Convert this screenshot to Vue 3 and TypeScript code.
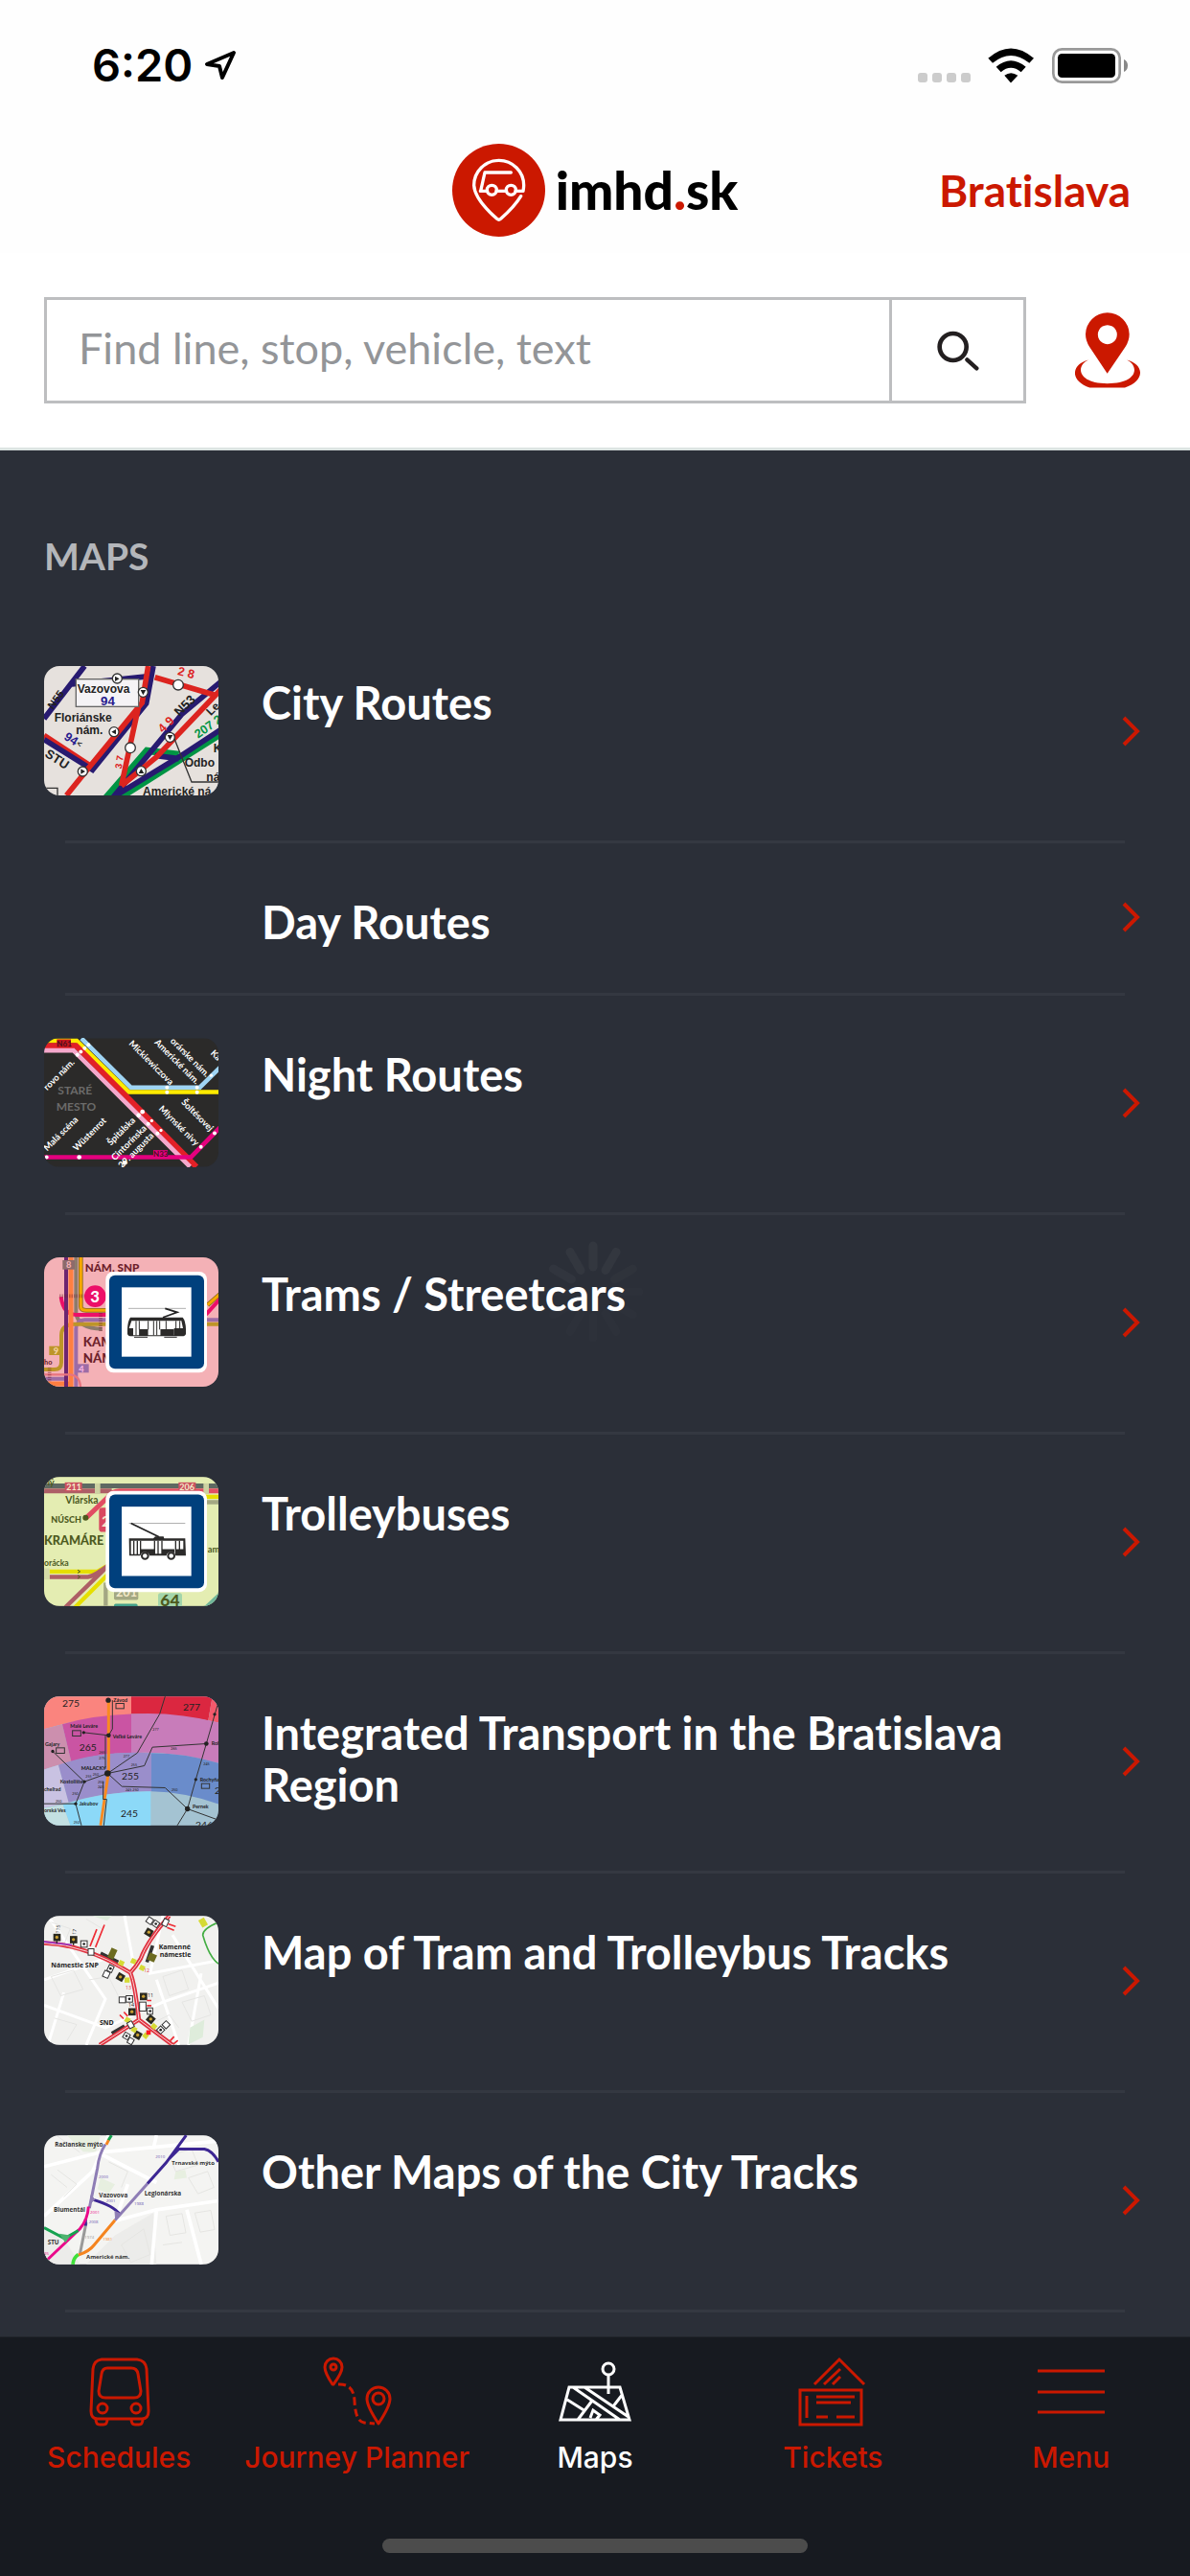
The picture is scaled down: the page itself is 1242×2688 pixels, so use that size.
<script setup lang="ts">
import { ref } from 'vue'

interface MapItem {
  title: string
  thumb: string
}

interface Tab {
  label: string
  icon: string
}

const query = ref('')
const activeTab = ref('Maps')

const maps: MapItem[] = [
  { title: 'City Routes', thumb: 'city' },
  { title: 'Day Routes', thumb: '' },
  { title: 'Night Routes', thumb: 'night' },
  { title: 'Trams / Streetcars', thumb: 'tram' },
  { title: 'Trolleybuses', thumb: 'trolley' },
  { title: 'Integrated Transport in the Bratislava Region', thumb: 'region' },
  { title: 'Map of Tram and Trolleybus Tracks', thumb: 'tracks' },
  { title: 'Other Maps of the City Tracks', thumb: 'other' },
]

const tabs: Tab[] = [
  { label: 'Schedules', icon: 'bus' },
  { label: 'Journey Planner', icon: 'journey' },
  { label: 'Maps', icon: 'map' },
  { label: 'Tickets', icon: 'ticket' },
  { label: 'Menu', icon: 'menu' },
]

const spokes = [0.04, 0.04, 0.02, 0.01, 0.01, 0.01, 0.01, 0.01, 0.01, 0.01, 0.03, 0.04]
</script>

<template>
  <div class="app">
    <div class="status">
      <div class="clock">
        <span>6:20</span>
        <svg class="locating" viewBox="0 0 34 32" aria-hidden="true">
          <path d="M31 3 L3 15 L16 17 L19 29 Z" fill="none" stroke="#000" stroke-width="4" stroke-linejoin="round" />
        </svg>
      </div>
      <div class="indicators">
        <div class="dots"><i v-for="n in 4" :key="n"></i></div>
        <svg class="wifi" viewBox="394 56 144 110" aria-hidden="true">
          <path d="M395 88 Q466 26 538 88 L524 103 Q466 56 409 103Z" />
          <path d="M420 115 Q466 76 513 115 L498 131 Q466 105 435 131Z" />
          <path d="M446 142 Q466 126 488 142 L466 165Z" />
        </svg>
        <svg class="battery" viewBox="594 57 237 111" aria-hidden="true">
          <rect x="598" y="61" width="208" height="103" rx="27" fill="none" stroke="#999" stroke-width="8" />
          <rect x="612" y="75" width="180" height="75" rx="13" />
          <path d="M819 93 Q831 98 831 112 Q831 127 819 132Z" fill="#888" />
        </svg>
      </div>
    </div>

    <header class="header">
      <a class="brand" href="#" aria-label="imhd.sk">
        <svg class="brand-mark" viewBox="93 60 291 291" aria-hidden="true">
          <circle cx="238.500" cy="205.500" r="145.500" fill="#cb1800" />
          <g fill="none" stroke="#fff" stroke-width="10" stroke-linecap="round" stroke-linejoin="round">
            <path d="M181 208 H203 M231 208 H263 M291 208 H315 Q317 198 317 190 A78 78 0 0 0 161 190 Q163 233 233 295 Q239 300 245 295 Q288 257 308 224" />
            <path d="M182 208 L195 150 H277" />
            <circle cx="217" cy="205" r="15" />
            <circle cx="277" cy="205" r="15" />
          </g>
        </svg>
        <span class="brand-name">imhd<b>.</b>sk</span>
      </a>
      <a class="city" href="#">Bratislava</a>
    </header>

    <form class="search" @submit.prevent>
      <div class="field">
        <input v-model="query" type="text" placeholder="Find line, stop, vehicle, text" aria-label="Find line, stop, vehicle, text" />
        <button type="submit" aria-label="Search">
          <svg class="glass" viewBox="236 950 132 126" aria-hidden="true">
            <g fill="none" stroke="#231f20" stroke-linecap="round">
              <circle cx="286" cy="1001" r="42" stroke-width="14" />
              <path d="M330 1041 L360 1068" stroke-width="13" />
            </g>
          </svg>
        </button>
      </div>
      <button class="nearby" type="button" aria-label="Nearby stops">
        <svg viewBox="666 890 204 236" aria-hidden="true">
          <g fill="#cb1800">
            <path fill-rule="evenodd" d="M767 1081 L711 997 Q699 978 699 958 A68 67 0 0 1 836 958 Q836 978 824 997Z M767 929 a30 30 0 1 0 1 0Z" />
            <path d="M708 1038 C652 1053 650 1105 712 1125 H822 C885 1105 885 1053 828 1038 C868 1056 864 1112 767 1112 C672 1112 668 1056 708 1038Z" />
          </g>
        </svg>
      </button>
    </form>

    <main class="content">
      <h1>MAPS</h1>
      <ul>
        <li v-for="item in maps" :key="item.title">
          <a class="row" href="#">
            <span class="thumb">
              <svg v-if="item.thumb === 'city'" viewBox="48 75 546 405" font-family="Liberation Sans, sans-serif" font-weight="700" font-size="36" fill="#222">
                <rect x="48" y="75" width="546" height="405" fill="#e6e1dd" />
                <g fill="none" stroke-width="17">
                  <path d="M48 240 L175 75 M135 132 L385 106" stroke="#271a70" />
                  <path d="M240 490 L370 340 L470 352 M280 490 L600 288" stroke="#009444" stroke-width="22" />
                  <path d="M48 292 L190 385" stroke="#dc241f" />
                  <path d="M48 305 L200 400 L368 192 L390 75 M265 485 L480 225 L600 125 M265 485 L470 360 L600 275 M395 355 L470 365" stroke="#271a70" />
                  <path d="M118 480 L195 385 L355 190 L374 75 M395 110 L580 165 M343 205 L290 450 M290 450 L400 360 L600 150" stroke="#dc241f" />
                </g>
                <path d="M455 300 L510 438 H600 M48 457 H90 V480" fill="none" stroke="#333" stroke-width="4" />
                <rect x="148" y="116" width="196" height="86" fill="#f5f3f6" stroke="#666" stroke-width="4" />
                <g fill="#fff" stroke="#333" stroke-width="4">
                  <circle cx="468" cy="134" r="16" /><circle cx="318" cy="331" r="16" />
                  <circle cx="277" cy="114" r="15" /><circle cx="358" cy="157" r="15" /><circle cx="267" cy="281" r="15" />
                  <circle cx="169" cy="405" r="15" /><circle cx="352" cy="404" r="15" /><circle cx="442" cy="298" r="15" />
                </g>
                <path d="M270 107 l14 8 -14 8z M350 150 h17 l-9 16z M273 273 v16 l-14 -8z M163 397 l14 8 -14 8z M344 411 l8 -15 9 15z M434 291 h17 l-9 16z" />
                <text x="152" y="159">Vazovova</text>
                <text x="225" y="198" fill="#271a8c" font-size="40">94</text>
                <text x="80" y="249">Floriánske</text>
                <text x="148" y="288">nám.</text>
                <text transform="translate(76 212) rotate(-54)" font-size="34">N55</text>
                <text transform="translate(108 302) rotate(33)" fill="#271a8c" font-size="38">94</text>
                <text transform="translate(148 322) rotate(33)" font-size="26">&lt;</text>
                <text transform="translate(48 356) rotate(33)" font-size="40">STU</text>
                <text transform="translate(464 102) rotate(14)" fill="#dc241f" font-size="38">2 8</text>
                <text transform="translate(420 286) rotate(-45)" fill="#dc241f" font-size="38">4 9</text>
                <text transform="translate(472 234) rotate(-45)" font-size="40">N53</text>
                <text transform="translate(290 398) rotate(-80)" fill="#dc241f" font-size="30">3 7</text>
                <text transform="translate(570 232) rotate(-45)">Le</text>
                <text transform="translate(530 302) rotate(-35)" fill="#009444" font-size="38">207 2</text>
                <text x="488" y="389">Odbo</text>
                <text x="556" y="434">ná</text>
                <text x="578" y="345">K</text>
                <text x="357" y="479">Americké ná</text>
              </svg>

              <svg v-else-if="item.thumb === 'night'" viewBox="48 70 546 402" font-family="Lato, sans-serif" font-weight="700" font-size="28" fill="#fff">
                <rect x="48" y="70" width="546" height="402" fill="#2b2a29" />
                <g fill="none" stroke-width="14">
                  <path d="M165 70 L320 224 H535 L600 160" stroke="#9fd4f3" />
                  <path d="M48 78 H150 L313 238 H600" stroke="#ffea00" />
                  <path d="M48 93 H148 L525 472" stroke="#e22027" stroke-width="18" />
                  <path d="M48 108 H140 L505 472" stroke="#f5a8cc" />
                  <path d="M48 442 H508 L600 348" stroke="#e5007e" />
                </g>
                <g fill="#6b6b6a" font-size="36">
                  <text x="91" y="246">STARÉ</text>
                  <text x="86" y="296">MESTO</text>
                </g>
                <rect x="88" y="73" width="44" height="25" fill="#c4161c" />
                <rect x="390" y="420" width="45" height="26" fill="#e5007e" />
                <g fill="#4a1020" font-size="24">
                  <text x="88" y="95">N61</text><text x="390" y="442">N33</text>
                </g>
                <g>
                  <circle cx="152" cy="122" r="6" /><circle cx="163" cy="112" r="6" /><circle cx="175" cy="101" r="6" /><circle cx="187" cy="90" r="6" />
                  <circle cx="433" cy="224" r="6" /><circle cx="433" cy="239" r="6" /><circle cx="527" cy="224" r="6" /><circle cx="527" cy="239" r="6" />
                  <circle cx="344" cy="311" r="7" /><circle cx="356" cy="300" r="7" /><circle cx="374" cy="338" r="6" /><circle cx="385" cy="328" r="5" /><circle cx="403" cy="368" r="6" /><circle cx="414" cy="358" r="5" />
                  <circle cx="56" cy="442" r="6" /><circle cx="158" cy="442" r="7" /><circle cx="300" cy="460" r="7" /><circle cx="539" cy="410" r="6" /><circle cx="582" cy="367" r="6" /><circle cx="571" cy="186" r="5" />
                </g>
                <text transform="translate(58 234) rotate(-45)">rovo nám.</text>
                <text transform="translate(58 424) rotate(-45)">Malá scéna</text>
                <text transform="translate(150 424) rotate(-45)">Wüstenrot</text>
                <text transform="translate(257 407) rotate(-45)">Špitálska</text>
                <text transform="translate(270 454) rotate(-45)">Cintorínska</text>
                <text transform="translate(292 478) rotate(-45)">29. augusta</text>
                <text transform="translate(312 88) rotate(45)">Mickiewiczova</text>
                <text transform="translate(392 84) rotate(45)">Americké nám.</text>
                <text transform="translate(442 80) rotate(45)">orárske nám.</text>
                <text transform="translate(568 118) rotate(45)">Ka</text>
                <text transform="translate(406 292) rotate(45)">Mlynské nivy</text>
                <text transform="translate(476 272) rotate(45)">Šoltésovej</text>
              </svg>

              <svg v-else-if="item.thumb === 'tram'" viewBox="48 66 546 405" font-family="Lato, sans-serif" font-weight="900" fill="#6d1f2b">
                <rect x="48" y="66" width="546" height="405" fill="#f4b1b6" />
                <g fill="none" stroke-width="12">
                  <path d="M148 66 V240 Q155 290 230 290" stroke="#8d7b6b" />
                  <path d="M163 66 V220 Q163 232 180 232 H250 M560 215 L600 180" stroke="#8a6a20" stroke-width="14" />
                  <path d="M163 66 V220 Q163 232 180 232 H250 M560 215 L600 180" stroke="#f6a800" stroke-width="9" />
                  <path d="M101 190 Q108 246 150 246 H250 M555 245 L600 195" stroke="#ec0f68" />
                  <path d="M250 262 H175 Q148 264 148 290 V471 M550 262 H600 M48 446 H120" stroke="#9d6ca6" />
                  <path d="M250 275 H140 Q102 278 102 310 V395 Q102 417 80 417 H48 M550 275 H600" stroke="#bd9528" />
                  <path d="M132 66 V471 M48 462 H125" stroke="#ff7f41" stroke-width="15" />
                  <path d="M117 66 V471" stroke="#6c2470" />
                  <path d="M48 433 H130 Q160 436 162 471" stroke="#e8747f" stroke-width="7" />
                </g>
                <rect x="106" y="75" width="38" height="29" fill="#8d6b6b" /><rect x="64" y="344" width="40" height="28" fill="#bd9528" /><rect x="148" y="400" width="40" height="27" fill="#9d6ca6" />
                <path d="M96 187 H172 M225 240 V300 M65 412 V455" stroke="#6d1f2b" stroke-width="11" stroke-dasharray="2 3" fill="none" opacity="0.6" />
                <circle cx="208" cy="188" r="34" fill="#ec0f68" />
                <g fill="#fff"><text x="193" y="206" font-size="50">3</text><text x="117" y="100" font-size="28" fill="#f4b1b6">8</text><text x="77" y="369" font-size="28" fill="#f4d0a0">9</text><text x="157" y="426" font-size="28" fill="#f4b1e0">4</text></g>
                <text x="176" y="111" font-size="35">NÁM. SNP</text>
                <text x="170" y="344" font-size="40">KAM</text>
                <text x="170" y="395" font-size="40">NÁM</text>
                <text x="48" y="402" font-size="22">ho</text>
                <rect x="241" y="111" width="317" height="316" rx="24" fill="#fff" />
                <rect x="252" y="122" width="297" height="293" rx="18" fill="#00407d" />
                <rect x="291" y="160" width="218" height="217" fill="#fff" />
                <path d="M312 226 H492" stroke="#888" stroke-width="2" />
                <path d="M427 226 L465 238 L420 254" fill="none" stroke="#222" stroke-width="5" />
                <path d="M318 254 H482 Q491 264 492 290 V306 Q490 313 480 313 H318 Q309 312 309 304 V290 Q310 266 318 254Z" fill="#2b2a29" />
                <path d="M322 265 H478 L483 288 H455 V310 H430 V291 H413 V310 H373 V291 H346 V310 H327 V288 H314Z" fill="#fff" />
                <path d="M346 291 H373 V312 H346Z M413 291 H455 V312 H413Z" fill="#2b2a29" />
                <path d="M336 265 V310 M346 265 V292 M374 265 V292 M391 265 V310 M401 265 V310 M410 265 V292 M430 265 V292 M461 265 V310 M473 265 V290 M330 316 H372 M424 316 H464" stroke="#2b2a29" stroke-width="3" />
              </svg>

              <svg v-else-if="item.thumb === 'trolley'" viewBox="48 64 546 404" font-family="Lato, sans-serif" font-weight="700" fill="#4d5a1e">
                <rect x="48" y="64" width="546" height="404" fill="#e4edb2" />
                <g fill="none" stroke-width="13">
                  <path d="M48 92 H600" stroke="#5f6962" stroke-width="15" />
                  <path d="M48 108 H260" stroke="#ad5f66" stroke-width="15" />
                  <path d="M180 192 L250 125 Q262 108 285 108 H600" stroke="#e14d63" stroke-width="15" />
                  <path d="M550 126 H600" stroke="#e6df00" /><path d="M550 143 H600" stroke="#a4a883" />
                  <path d="M65 360 H215 L250 340 M145 472 L250 367" stroke="#e6df00" />
                  <path d="M65 377 H185 Q205 374 250 340 M115 472 L245 345" stroke="#ad5f66" />
                  <path d="M241 395 V468" stroke="#a4a883" />
                  <path d="M590 440 V468 L560 468Z" stroke="#6fb59a" />
                </g>
                <rect x="207" y="84" width="17" height="33" fill="#cdd2a2" /><rect x="547" y="84" width="17" height="33" fill="#cdd2a2" />
                <rect x="48" y="350" width="17" height="35" fill="#d5dba8" />
                <rect x="113" y="81" width="54" height="28" fill="#cc5260" /><rect x="469" y="81" width="54" height="28" fill="#cc5260" />
                <rect x="220" y="160" width="40" height="76" rx="10" fill="#d94860" />
                <rect x="267" y="405" width="76" height="44" rx="5" fill="#a4a883" /><rect x="267" y="461" width="74" height="14" rx="5" fill="#43a08a" />
                <rect x="405" y="427" width="75" height="50" rx="8" fill="#a3d5ab" />
                <g fill="#f3e8c8"><text x="118" y="107" font-size="27">211</text><text x="472" y="107" font-size="27">206</text><text x="228" y="220" font-size="48">2</text><text x="273" y="438" font-size="38">201</text></g>
                <circle cx="178" cy="192" r="9" />
                <text x="50" y="92" font-size="28">ný</text>
                <text x="115" y="147" font-size="31">Vlárska</text>
                <text x="70" y="208" font-size="27" font-weight="900">NÚSCH</text>
                <text x="48" y="276" font-size="38" font-weight="900">KRAMÁRE</text>
                <text x="48" y="343" font-size="26">orácka</text>
                <text x="560" y="301" font-size="28">am</text>
                <text x="412" y="470" font-size="52" font-weight="900">64</text>
                <path d="M153 355 l8 5 -8 5 M153 372 l8 5 -8 5" fill="none" stroke="#4d5a1e" stroke-width="3" />
                <rect x="241" y="108" width="317" height="316" rx="24" fill="#fff" />
                <rect x="252" y="119" width="297" height="293" rx="18" fill="#00407d" />
                <rect x="291" y="157" width="218" height="217" fill="#fff" />
                <path d="M314 209 H490" stroke="#888" stroke-width="2" />
                <path d="M320 209 L408 252" stroke="#222" stroke-width="5" />
                <path d="M314 256 H390 L396 250 H422 L424 256 H490 L492 310 H460 a15 15 0 0 0 -29 0 H378 a15 15 0 0 0 -29 0 H315Z" fill="#2b2a29" />
                <path d="M320 264 H484 V290 H460 V304 H456 V290 H417 V304 H394 V290 H350 V306 H320Z" fill="#fff" />
                <path d="M329 264 V308 M340 264 V308 M350 264 V308 M394 264 V308 M405 264 V308 M417 264 V308 M460 264 V308 M472 264 V308" stroke="#2b2a29" stroke-width="4" />
                <circle cx="364" cy="311" r="10" fill="#fff" stroke="#2b2a29" stroke-width="6" /><circle cx="446" cy="311" r="10" fill="#fff" stroke="#2b2a29" stroke-width="6" />
              </svg>

              <svg v-else-if="item.thumb === 'region'" viewBox="48 63 546 404" font-family="Lato, sans-serif" fill="#222">
                <rect x="48" y="63" width="546" height="404" fill="#a4c3d2" />
                <path d="M48 63 H321 V120 Q180 125 48 165Z" fill="#fa847e" />
                <path d="M321 63 H575 L562 138 Q440 115 321 118Z" fill="#db2740" />
                <path d="M575 63 H594 V145 L562 138Z" fill="#f3596c" />
                <path d="M48 165 L105 150 L133 267 Q80 280 48 292Z" fill="#cc8fae" />
                <path d="M105 150 Q200 122 321 118 V240 Q220 240 133 267Z" fill="#ca54a3" />
                <path d="M321 118 Q460 110 594 145 V272 Q450 232 321 240Z" fill="#c87cba" />
                <path d="M48 292 L93 278 L125 395 L48 412Z" fill="#c9c2e2" />
                <path d="M93 278 Q220 232 384 240 V360 Q240 360 125 395Z" fill="#9a8ecb" />
                <path d="M384 240 Q490 240 594 272 V400 Q490 362 384 360Z" fill="#6a8ccb" />
                <path d="M107 402 Q240 358 382 360 V467 H130Z" fill="#8cd9f8" />
                <path d="M48 412 L107 402 L130 467 H48Z" fill="#c3e0e2" />
                <path d="M250 75 V300 L225 467" fill="none" stroke="#f98b21" stroke-width="9" />
                <g fill="none" stroke="#333" stroke-width="3">
                  <path d="M240 290 V185 M262 75 V165 L250 185 M172 176 L250 185 M75 235 L174 330 L247 304 L340 240 L410 118 L427 63 M247 304 L362 280 L387 222 L556 211 M247 304 L292 345 L427 349 L497 415 L594 450 M497 415 L465 467 M497 415 L523 323 L556 211 L594 80 M48 399 H147 L174 330 M147 399 L165 467 M233 330 V385 H244 L235 467" />
                  <rect x="273" y="85" width="25" height="16" /><rect x="137" y="170" width="26" height="17" /><rect x="86" y="224" width="26" height="17" /><rect x="541" y="336" width="25" height="15" />
                </g>
                <circle cx="249" cy="75" r="8" /><circle cx="250" cy="185" r="7" /><circle cx="247" cy="304" r="10" /><circle cx="556" cy="211" r="7" /><circle cx="497" cy="415" r="8" />
                <circle cx="172" cy="176" r="5" /><circle cx="75" cy="235" r="5" /><circle cx="174" cy="330" r="5" /><circle cx="147" cy="399" r="5" /><circle cx="523" cy="323" r="5" /><circle cx="582" cy="119" r="5" />
                <g font-size="31" font-weight="400">
                  <text x="105" y="97">275</text><text x="483" y="107">277</text><text x="158" y="233">265</text><text x="291" y="325">255</text><text x="288" y="441">245</text><text x="522" y="476">246</text><text x="582" y="368">25</text>
                </g>
                <g font-size="16" font-weight="700">
                  <text x="265" y="81">Závod</text><text x="130" y="163">Malé Leváre</text><text x="263" y="195">Veľké Leváre</text><text x="51" y="218">Gajary</text><text x="164" y="293" font-weight="900">MALACKY</text><text x="98" y="336">Kostolište</text><text x="158" y="406">Jakubov</text><text x="513" y="414">Pernek</text><text x="536" y="330">Rochyňa</text><text x="48" y="361">cheľrad</text><text x="48" y="426">orská Ves</text><text x="572" y="217">Roh</text>
                </g>
                <g font-size="11">
                  <text x="388" y="172">277</text><text x="296" y="255">277</text><text x="320" y="281">255</text><text x="445" y="232">265</text><text x="178" y="318">255</text><text x="200" y="312">250</text><text x="136" y="372">250</text><text x="84" y="395">250</text><text x="303" y="359">245 250</text><text x="447" y="360">250</text><text x="216" y="336">250</text><text x="216" y="352">245</text><text x="220" y="242">265</text><text x="220" y="260">275</text><text x="547" y="278">245</text><text x="140" y="461">250</text>
                </g>
              </svg>

              <svg v-else-if="item.thumb === 'tracks'" viewBox="48 60 546 404" font-family="Open Sans, sans-serif" font-weight="700" fill="#222">
                <rect x="48" y="60" width="546" height="404" fill="#f1f1ef" />
                <g fill="none" stroke="#fff" stroke-width="9">
                  <path d="M48 340 L240 410 L420 330 L594 270 M60 60 L240 320 L180 464 M48 260 L250 190 M420 60 L380 240 L594 200 M400 260 L470 464 M110 300 L60 464 M450 120 L594 350 M300 60 L330 220 M540 240 L500 464" />
                </g>
                <g fill="none" stroke="#e5e5e3" stroke-width="3">
                  <path d="M70 80 l60 20 -20 50 M180 70 l50 30 M70 250 l70 -20 30 60 -70 20z M190 260 l60 -10 30 60 M80 380 l70 20 -30 50 M420 250 l60 -20 20 60 -60 20z M480 330 l70 -20 20 60 -60 20z M400 390 l40 -20 30 40" />
                </g>
                <path d="M505 410 L550 385 L545 440 L500 462Z M200 60 H260 L245 75Z" fill="#deecdb" />
                <path d="M594 80 Q545 100 545 120 Q565 190 594 210" fill="none" stroke="#43ad43" stroke-width="5" />
                <path d="M225 177 L280 205 M370 205 L388 153 M260 428 L300 405" stroke="#333" stroke-width="11" />
                <g fill="none" stroke="#df3340" stroke-width="13">
                  <path d="M48 145 Q180 150 318 238 Q332 270 345 385 L222 464 M440 60 Q370 140 350 195 Q335 220 318 238 M345 385 L450 464" />
                </g>
                <path d="M48 145 Q180 150 318 238 Q332 270 345 385 L222 464 M440 60 Q370 140 350 195 Q335 220 318 238 M345 385 L450 464" fill="none" stroke="#fbd5d8" stroke-width="3" />
                <path d="M48 141 L135 151" stroke="#9536c8" stroke-width="5" />
                <path d="M88 138 V146 M140 145 V152" stroke="#222" stroke-width="4" />
                <g fill="#2a2920">
                  <rect x="77" y="116" width="23" height="23" /><rect x="129" y="123" width="23" height="23" />
                  <rect x="365" y="100" width="23" height="23" transform="rotate(30 376 111)" /><rect x="276" y="240" width="23" height="23" transform="rotate(30 287 251)" />
                  <rect x="348" y="301" width="23" height="23" /><rect x="312" y="349" width="23" height="23" /><rect x="371" y="372" width="23" height="23" transform="rotate(40 382 383)" /><rect x="330" y="422" width="23" height="23" transform="rotate(30 341 433)" />
                </g>
                <g fill="#6c6b20">
                  <rect x="252" y="162" width="20" height="32" transform="rotate(25 262 178)" /><rect x="374" y="178" width="24" height="24" transform="rotate(25 386 190)" />
                </g>
                <g fill="#d5da35">
                  <rect x="282" y="200" width="16" height="16" transform="rotate(25 290 208)" /><rect x="320" y="194" width="16" height="16" transform="rotate(25 328 202)" /><rect x="347" y="215" width="16" height="16" transform="rotate(25 355 223)" /><rect x="300" y="253" width="16" height="16" /><rect x="536" y="68" width="20" height="26" transform="rotate(-30 546 81)" /><rect x="301" y="378" width="16" height="16" transform="rotate(30 309 386)" /><rect x="322" y="408" width="16" height="16" transform="rotate(30 330 416)" /><rect x="384" y="398" width="16" height="16" transform="rotate(40 392 406)" /><rect x="358" y="427" width="16" height="16" transform="rotate(40 366 435)" />
                </g>
                <g fill="#c9a032"><circle cx="88" cy="127" r="5" /><circle cx="140" cy="134" r="5" /><circle cx="376" cy="111" r="5" /><circle cx="287" cy="251" r="5" /><circle cx="359" cy="312" r="5" /><circle cx="323" cy="360" r="5" /><circle cx="382" cy="383" r="5" /><circle cx="341" cy="433" r="5" /></g>
                <g fill="#fff" stroke="#333" stroke-width="3">
                  <rect x="163" y="138" width="20" height="20" /><rect x="186" y="163" width="18" height="20" /><rect x="234" y="233" width="18" height="20" transform="rotate(25 243 243)" /><rect x="248" y="215" width="16" height="20" transform="rotate(25 256 225)" /><rect x="283" y="314" width="20" height="18" /><rect x="305" y="310" width="20" height="20" /><rect x="370" y="66" width="18" height="18" transform="rotate(35 379 75)" /><rect x="389" y="76" width="18" height="18" transform="rotate(35 398 85)" /><rect x="420" y="70" width="16" height="22" transform="rotate(25 428 81)" /><rect x="347" y="330" width="20" height="28" /><rect x="371" y="348" width="17" height="20" /><rect x="311" y="391" width="16" height="20" transform="rotate(-30 319 401)" /><rect x="297" y="427" width="18" height="18" transform="rotate(30 306 436)" /><rect x="404" y="408" width="18" height="18" transform="rotate(-45 413 417)" /><rect x="421" y="392" width="18" height="18" transform="rotate(-45 430 401)" /><rect x="311" y="443" width="16" height="18" transform="rotate(30 319 452)" />
                </g>
                <g fill="#222"><circle cx="173" cy="148" r="4" /><circle cx="256" cy="225" r="4" /><circle cx="315" cy="320" r="4" /><circle cx="398" cy="85" r="4" /><circle cx="380" cy="358" r="4" /><circle cx="306" cy="436" r="4" /><circle cx="413" cy="417" r="4" /></g>
                <g stroke="#ee2d36" stroke-width="5">
                  <path d="M192 155 L213 102 M209 158 L237 88 M436 85 L460 93 M433 96 L455 105 M285 370 L297 382 M298 361 L310 374 M370 325 H384 M370 341 H384 M442 452 L455 438 M452 462 L467 450" />
                </g>
                <rect x="368" y="418" width="14" height="14" fill="#ff1a20" />
                <text x="70" y="221" font-size="21">Námestie SNP</text>
                <text x="407" y="164" font-size="21">Kamenné</text>
                <text x="410" y="190" font-size="21">námestie</text>
                <text x="222" y="403" font-size="21">SND</text>
                <g fill="#e54550" font-size="16" font-weight="400"><text x="303" y="290">13</text><text x="360" y="238">12</text></g>
                <text transform="translate(96 116) rotate(-85)" font-size="16" font-weight="400">115</text><text transform="translate(147 120) rotate(-80)" font-size="16" font-weight="400">17</text>
                <text x="372" y="316" font-size="16" font-weight="400">11</text><text x="312" y="346" font-size="16" font-weight="400">14</text>
              </svg>

              <svg v-else-if="item.thumb === 'other'" viewBox="48 57 546 404" font-family="Open Sans, sans-serif" font-weight="700" font-size="19" fill="#333">
                <rect x="48" y="57" width="546" height="404" fill="#f4f4f2" />
                <path d="M48 340 L110 380 L160 460 H48Z M270 370 L390 300 L400 461 H180Z" fill="#ececea" />
                <path d="M120 57 H225 L210 110 L170 108Z M225 190 L270 210 L250 240 L215 225Z M460 170 L490 165 L495 190 L455 195Z" fill="#e7efe0" />
                <g fill="none" stroke="#fff" stroke-width="11">
                  <path d="M48 155 L225 110 L594 75 M225 115 L400 205 M48 310 L200 170 L250 57 M270 325 L400 290 L594 262 M400 290 L385 461 M310 210 L270 330 M495 290 L540 461 M400 57 L390 100" />
                </g>
                <g fill="none" stroke="#e5e5e2" stroke-width="3">
                  <path d="M70 180 l50 40 M90 165 l60 45 -40 40 M440 120 l70 -20 20 50 -70 20z M500 190 l60 -20 20 50 -50 20z M430 310 l50 -8 12 60 -50 8z M520 300 l50 -8 12 60 -45 8z M420 400 l60 -8 M290 400 l70 -50 20 80 -60 25z M250 140 l60 30 -20 50 M90 60 l70 50" />
                </g>
                <g fill="none" stroke-width="9">
                  <path d="M180 330 L160 430" stroke="#999" />
                  <path d="M240 85 Q220 115 215 160 L190 285" stroke="#8e7db5" />
                  <path d="M372 208 L270 323" stroke="#8e7db5" />
                  <path d="M493 57 L430 143 L372 208 M440 130 L470 100 H550 Q575 105 594 140" stroke="#3c2693" />
                  <path d="M200 258 Q268 278 285 305 M178 318 V340" stroke="#3c2693" />
                  <path d="M195 245 L207 258 L192 270Z M270 295 L290 303 L272 320Z" fill="#8e7db5" stroke="#8e7db5" stroke-width="3" />
                  <path d="M187 280 Q185 320 160 350 L60 445" stroke="#ea0a8a" />
                  <path d="M270 323 L205 400 Q190 420 155 432" stroke="#f5841f" />
                  <path d="M48 346 L112 380 L155 355" stroke="#15a250" />
                  <path d="M95 365 L115 393 L130 370" fill="#4db36f" stroke="none" />
                  <path d="M155 430 Q140 440 138 461" stroke="#3fe03a" stroke-width="11" />
                  <path d="M249 73 L259 57" stroke="#15a250" /><path d="M243 86 L250 72" stroke="#f5841f" />
                </g>
                <text x="82" y="92">Račianske mýto</text>
                <text x="448" y="149" font-size="18">Trnavské mýto</text>
                <text x="362" y="246">Legionárska</text>
                <text x="220" y="252">Vazovova</text>
                <text x="78" y="298">Blumentál</text>
                <text x="59" y="400">STU</text>
                <text x="180" y="443" font-size="18">Americké nám.</text>
                <g font-size="13" font-weight="400" fill="#6a55ae">
                  <text x="397" y="128">2010</text><text x="219" y="193">2000</text><text x="330" y="277">1988</text><text x="242" y="268">2001</text><text x="188" y="332">2008</text>
                  <text x="192" y="303" fill="#ea0a8a">2001</text><text x="175" y="382" fill="#999">1974</text><text x="232" y="387" fill="#f5841f">1981</text><text x="48" y="432" fill="#ea0a8a">95</text>
                </g>
              </svg>
            </span>
            <span class="title">{{ item.title }}</span>
            <svg class="chevron" viewBox="0 0 19 32" aria-hidden="true">
              <path d="M2 2 L16 16 L2 30" fill="none" stroke="#cb1800" stroke-width="4" />
            </svg>
          </a>
        </li>
      </ul>
    </main>

    <nav class="tabs">
      <button
        v-for="tab in tabs"
        :key="tab.label"
        type="button"
        :class="{ active: tab.label === activeTab }"
        @click="activeTab = tab.label"
      >
        <svg class="tab-icon" viewBox="0 0 72 72" fill="none" stroke="currentColor" stroke-width="3" aria-hidden="true">
          <g v-if="tab.icon === 'bus'">
            <path d="M18 2 H55 Q64 3 65 12 L67 56 Q67 64 60 64 H14 Q7 64 7 56 L9 12 Q10 3 18 2Z" />
            <path d="M24 11 H49 Q55 11 56 17 L59 35 Q59 42 52 42 H22 Q15 42 15 35 L18 17 Q19 11 24 11Z" />
            <circle cx="19" cy="53" r="5" /><circle cx="54" cy="53" r="5" />
            <path d="M12 64 Q12 70 16 70 H20 Q24 70 24 64 M49 64 Q49 70 53 70 H57 Q61 70 61 64" />
          </g>
          <g v-else-if="tab.icon === 'journey'" stroke-linejoin="round">
            <path d="M10 28 Q2 16 2 10 A9 9 0 0 1 20 10 Q20 16 11 28Z" />
            <circle cx="11" cy="10" r="3" />
            <path d="M58 69 Q46 51 46 43 A12 12 0 0 1 70 43 Q70 51 58 69Z" />
            <circle cx="58" cy="43" r="6" />
            <path d="M16 28 Q32 27 33 45 Q34 67 43 68 L54 69" stroke-dasharray="8 4" />
          </g>
          <g v-else-if="tab.icon === 'map'">
            <circle cx="50" cy="12" r="6" />
            <path d="M50 18 V38 M9 31 H62 L72 65 H0Z M13 31 L62 65 M25 31 L71 62 M7 44 L26 56 M18 65 L33 45 M65 38 L55 51 M31 63 L34 55 L41 60 L37 65" />
          </g>
          <g v-else-if="tab.icon === 'ticket'">
            <path d="M2 34 H66 V70 H2Z M9 40 V63 M19 41 H59 M19 47 H55 M19 62 H31 M40 62 H59" />
            <path d="M17 28 L43 2 L69 28 M27 28 L44 12 M36 28 L44 20" />
          </g>
          <g v-else>
            <path d="M1 14 H71 M1 36 H71 M1 57 H71" />
          </g>
        </svg>
        <span>{{ tab.label }}</span>
      </button>
    </nav>
    <div class="home"><i></i></div>

    <svg class="spinner" viewBox="-54 -54 108 108" aria-hidden="true">
      <line
        v-for="(alpha, i) in spokes"
        :key="i"
        x1="0"
        y1="-26"
        x2="0"
        y2="-48"
        stroke="#fff"
        stroke-width="9"
        stroke-linecap="round"
        :stroke-opacity="alpha"
        :transform="`rotate(${i * 30})`"
      />
    </svg>
  </div>
</template>

<style>
body {
  margin: 0;
  background: #171a20;
}
</style>

<style scoped>
.app {
  position: relative;
  display: flex;
  flex-direction: column;
  min-height: 100vh;
  background: #fff;
  font-family: Lato, sans-serif;
  font-variant-ligatures: none;
}

a {
  color: inherit;
  text-decoration: none;
}

button {
  padding: 0;
  border: 0;
  background: none;
  cursor: pointer;
}

svg {
  display: block;
}

.status {
  display: flex;
  align-items: center;
  justify-content: space-between;
  height: 128px;
  padding: 4px 65px 0 96px;
  background: #fefefe;
}

.clock {
  display: flex;
  align-items: center;
  gap: 12px;
  font: 600 47px/58px Inter, sans-serif;
}

.locating {
  width: 34px;
  height: 32px;
}

.indicators {
  display: flex;
  align-items: center;
  height: 38px;
}

.dots {
  display: flex;
  gap: 5px;
  align-self: flex-end;
  margin-right: 18px;
  padding-bottom: 1px;
}

.dots i {
  width: 10px;
  height: 10px;
  border-radius: 3px;
  background: #ccc;
}

.wifi {
  width: 48px;
  height: 37px;
  margin-right: 19px;
}

.battery {
  width: 79px;
  height: 37px;
}

.header {
  display: grid;
  grid-template-columns: 1fr auto 1fr;
  align-items: center;
  height: 132px;
  padding: 0 62px;
  background: #fefefe;
}

.brand {
  grid-column: 2;
  display: flex;
  align-items: center;
  gap: 11px;
}

.brand-mark {
  width: 97px;
  height: 97px;
}

.brand-name {
  font-size: 55px;
  font-weight: 900;
  line-height: 60px;
  color: #000;
}

.brand-name b {
  font-weight: 900;
  color: #cb1800;
}

.city {
  justify-self: end;
  padding-top: 2px;
  font-size: 46px;
  font-weight: 700;
  line-height: 54px;
  color: #cb1800;
}

.search {
  display: flex;
  align-items: center;
  gap: 51px;
  padding: 46px 52px 46px 46px;
  border-bottom: 3px solid #dce4e2;
}

.field {
  display: flex;
  flex: 1;
  height: 105px;
  border: 3px solid #bdbec0;
}

.field input {
  flex: 1;
  min-width: 0;
  padding: 0 34px 6px 33px;
  border: 0;
  outline: 0;
  background: none;
  font: 400 45px/54px Lato, sans-serif;
  color: #231f20;
}

.field input::placeholder {
  color: #939598;
  opacity: 1;
}

.field button {
  display: flex;
  align-items: center;
  justify-content: center;
  width: 140px;
  border-left: 3px solid #bdbec0;
}

.glass {
  width: 44px;
  height: 42px;
}

.nearby svg {
  width: 68px;
  height: 79px;
}

.content {
  flex: 1;
  padding: 83px 46px 20px;
  background: #2b2f38;
  color: #fff;
}

h1 {
  margin: 0 0 44px;
  font-size: 39px;
  font-weight: 700;
  line-height: 54px;
  color: #b4b6ba;
}

ul {
  margin: 0;
  padding: 0;
  list-style: none;
}

.row {
  display: flex;
  align-items: flex-start;
  padding: 44px 6px 47px 0;
}

li::after {
  content: '';
  display: block;
  height: 3px;
  margin: 0 22px;
  background: #343841;
}

.thumb {
  flex: none;
  width: 182px;
  border-radius: 16px;
  overflow: hidden;
}

.thumb svg {
  width: 182px;
  height: 135px;
}

.title {
  flex: 1;
  padding: 11px 64px 0 45px;
  font-size: 47px;
  font-weight: 700;
  line-height: 54px;
}

.chevron {
  align-self: center;
  width: 19px;
  height: 32px;
}

.tabs {
  display: grid;
  grid-template-columns: repeat(5, 1fr);
  padding-top: 21px;
  border-top: 1px solid #22252b;
  background: #171a20;
}

.tabs button {
  display: flex;
  flex-direction: column;
  align-items: center;
  gap: 14px;
  font: 500 30px/36px Inter, sans-serif;
  color: #cb1800;
}

.tabs button.active {
  color: #fff;
}

.tab-icon {
  width: 72px;
  height: 72px;
  overflow: visible;
}

.home {
  display: flex;
  justify-content: center;
  padding: 67px 0 24px;
  background: #171a20;
}

.home i {
  width: 444px;
  height: 15px;
  border-radius: 8px;
  background: #4c4c4c;
}

.spinner {
  position: absolute;
  top: 50%;
  left: 50%;
  width: 108px;
  height: 108px;
  margin: -50px 0 0 -56px;
  pointer-events: none;
}
</style>
